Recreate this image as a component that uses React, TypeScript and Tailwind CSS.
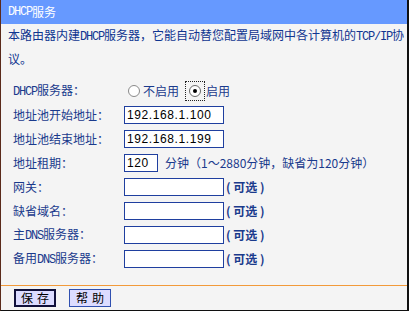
import React from "react";

const CJK = { fontFamily: '"Noto Sans CJK SC", "Liberation Sans", sans-serif' };

function L({ children }: { children: React.ReactNode }) {
  return (
    <span className="text-[12px] tracking-[-1.2px]" style={{ fontFamily: '"Liberation Mono", monospace' }}>
      {children}
    </span>
  );
}

function Field({ w = "w-[100px]", value = "" }: { w?: string; value?: string }) {
  return (
    <div
      className={`${w} h-[18px] border border-[#1f3f9f] bg-white flex items-center pl-[2px] text-[12px] text-black tracking-[0.6px]`}
      style={{ fontFamily: '"Liberation Sans", sans-serif' }}
    >
      {value}
    </div>
  );
}

function Row({ label, children }: { label: React.ReactNode; children: React.ReactNode }) {
  return (
    <div className="flex items-center h-[24px]">
      <div className="w-[111px] text-[12px] text-[#1a3a8c]">{label}</div>
      <div className="flex items-center">{children}</div>
    </div>
  );
}

function Opt() {
  return (
    <span className="ml-[2px] text-[12px] text-[#1a3a8c] font-bold whitespace-pre">
      {"( 可选 )"}
    </span>
  );
}

export default function App() {
  return (
    <div
      className="w-[409px] h-[311px] bg-[#f4f4f4] border-l border-l-[#5a2a1a] border-r-2 border-r-[#101010] border-b border-b-[#101010] flex flex-col overflow-hidden"
      style={CJK}
    >
      <div className="h-[24px] bg-[#6699ff] text-white text-[12px] flex items-center pl-[7px] shrink-0">
        <L>DHCP</L>服务
      </div>
      <div className="px-[7px] text-[12px] leading-[22px] text-[#0f3590] whitespace-nowrap">
        本路由器内建<L>DHCP</L>服务器，它能自动替您配置局域网中各计算机的<L>TCP/IP</L>协
        <br />
        议。
      </div>
      <div className="mt-[9px] pl-[12px]">
        <Row label={<><L>DHCP</L>服务器：</>}>
          <div className="flex items-center text-[12px] text-[#1a3a8c]">
            <span className="w-[12px] h-[12px] rounded-full border border-[#8a8a8a] bg-white ml-[4px]" />
            <span className="ml-[3px]">不启用</span>
            <span className="ml-[6px] w-[20px] h-[20px] border border-dotted border-[#222] flex items-center justify-center">
              <span className="w-[12px] h-[12px] rounded-full border border-[#6a6a6a] bg-white flex items-center justify-center">
                <span className="w-[4px] h-[4px] rounded-full bg-black" />
              </span>
            </span>
            <span className="ml-[1px]">启用</span>
          </div>
        </Row>
        <Row label="地址池开始地址：">
          <Field value="192.168.1.100" />
        </Row>
        <Row label="地址池结束地址：">
          <Field value="192.168.1.199" />
        </Row>
        <Row label="地址租期：">
          <Field w="w-[34px]" value="120" />
          <span className="ml-[7px] text-[12px] text-[#1a3a8c]">
            分钟（1～2880分钟，缺省为120分钟）
          </span>
        </Row>
        <Row label="网关：">
          <Field />
          <Opt />
        </Row>
        <Row label="缺省域名：">
          <Field />
          <Opt />
        </Row>
        <Row label={<>主<L>DNS</L>服务器：</>}>
          <Field />
          <Opt />
        </Row>
        <Row label={<>备用<L>DNS</L>服务器：</>}>
          <Field />
          <Opt />
        </Row>
      </div>
      <div className="mt-[14px] h-[1px] bg-[#f29a3a]" />
      <div className="mt-[3px] flex pl-[13px] gap-[13px]">
        <button className="w-[42px] h-[18px] border-2 border-[#10103a] bg-[#dcdcff] text-[12px] text-black leading-none tracking-[4px] pl-[4px]">
          保存
        </button>
        <button className="w-[42px] h-[18px] border border-[#3050b0] bg-[#dcdcff] text-[12px] text-black leading-none tracking-[4px] pl-[4px]">
          帮助
        </button>
      </div>
    </div>
  );
}
